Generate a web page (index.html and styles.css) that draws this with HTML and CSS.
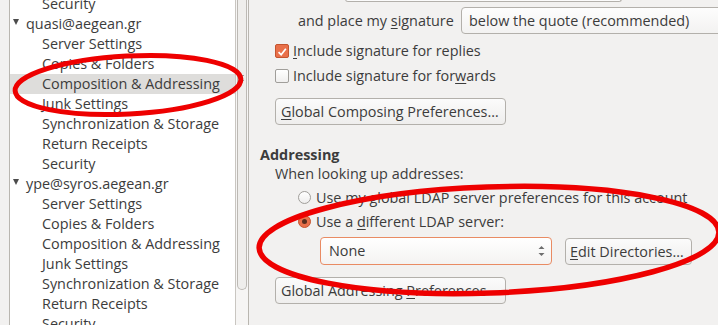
FILE: index.html
```html
<!DOCTYPE html>
<html>
<head>
<meta charset="utf-8">
<link rel="stylesheet" href="styles.css">
</head>
<body>
<div class="window">
  <div class="sidebar">
    <div class="tree">
      <ul class="rows">
        <li class="row child">Security</li>
        <li class="row account"><span class="twisty"></span>quasi@aegean.gr</li>
        <li class="row child">Server Settings</li>
        <li class="row child">Copies &amp; Folders</li>
        <li class="row child selected">Composition &amp; Addressing</li>
        <li class="row child">Junk Settings</li>
        <li class="row child">Synchronization &amp; Storage</li>
        <li class="row child">Return Receipts</li>
        <li class="row child">Security</li>
        <li class="row account"><span class="twisty"></span>ype@syros.aegean.gr</li>
        <li class="row child">Server Settings</li>
        <li class="row child">Copies &amp; Folders</li>
        <li class="row child">Composition &amp; Addressing</li>
        <li class="row child">Junk Settings</li>
        <li class="row child">Synchronization &amp; Storage</li>
        <li class="row child">Return Receipts</li>
        <li class="row child">Security</li>
      </ul>
    </div>
    <div class="scrollbar">
      <div class="thumb"><span class="grip"></span></div>
    </div>
  </div>
  <div class="content">
    <div class="top-combo"></div>
    <div class="sig-row">
      <span class="sig-label">and place my <u>s</u>ignature</span>
      <div class="combo wide">below the quote (recommended)</div>
    </div>
    <label class="check-row"><span class="checkbox checked"><svg viewBox="0 0 14 14" width="14" height="14"><path d="M3 7.2 L6 10.2 L11.5 3.2" fill="none" stroke="#fff" stroke-width="2"/></svg></span><span><u>I</u>nclude signature for replies</span></label>
    <label class="check-row"><span class="checkbox"></span><span>Include signature for for<u>w</u>ards</span></label>
    <div class="btn-row"><button class="btn gbtn first"><u>G</u>lobal Composing Preferences…</button></div>
    <h3 class="section">Addressing</h3>
    <div class="sub">When looking up addresses:</div>
    <label class="radio-row"><span class="radio"></span><span>Use my global LDAP server preferences for this account</span></label>
    <label class="radio-row"><span class="radio on"></span><span>Use a <u>d</u>ifferent LDAP server:</span></label>
    <div class="ldap-row">
      <div class="select">None<span class="spin"><svg width="7" height="14" viewBox="0 0 7 14"><path d="M0.5 5 L3.5 2 L6.5 5Z M0.5 9 L3.5 12 L6.5 9Z" fill="#6e6e6e"/></svg></span></div>
      <button class="btn edit"><u>E</u>dit Directories…</button>
    </div>
    <div class="btn-row"><button class="btn gbtn last">Global Addressing <u>P</u>references</button></div>
  </div>
  <svg class="marks" width="718" height="325" viewBox="0 0 718 325">
    <ellipse cx="128" cy="85" rx="113" ry="29" transform="rotate(-3 128 85)" fill="none" stroke="#ee0000" stroke-width="5"/>
    <ellipse cx="489" cy="240" rx="230" ry="53" transform="rotate(-2 489 240)" fill="none" stroke="#ee0000" stroke-width="5.5"/>
  </svg>
</div>
</body>
</html>
```

FILE: styles.css
```css
html, body {
  margin: 0;
  padding: 0;
}
body {
  background: #f2f1f0;
  font-family: "Open Sans", "Noto Sans", sans-serif;
  font-size: 14.4px;
  color: #3c3c3c;
  width: 718px;
  height: 325px;
  overflow: hidden;
}
.window {
  position: relative;
  display: flex;
  width: 718px;
  height: 325px;
  overflow: hidden;
}
.sidebar {
  display: flex;
  width: 238px;
  margin-left: 9px;
  border-left: 1px solid #b9b6b0;
  border-right: 1px solid #b9b6b0;
  background: #ffffff;
  flex: none;
}
.tree {
  flex: 1;
  overflow: hidden;
}
.rows {
  list-style: none;
  margin: -6px 0 0 0;
  padding: 0;
}
.row {
  height: 20px;
  line-height: 20px;
  white-space: nowrap;
  color: #3c3c3c;
}
.row.child { padding-left: 32px; }
.row.account { padding-left: 3px; display: flex; align-items: center; }
.row.selected { background: #dedddb; }
.twisty {
  width: 0;
  height: 0;
  border-left: 3.5px solid transparent;
  border-right: 3.5px solid transparent;
  border-top: 6px solid #4c4c4c;
  margin: 0 7px 4px 0;
}
.scrollbar {
  width: 12px;
  border-left: 1px solid #c9c6c1;
  background: #f6f5f4;
  flex: none;
}
.thumb {
  height: 290px;
  margin: 0 1px;
  background: #efeeec;
  border: 1px solid #bcb9b4;
  border-top: none;
  border-radius: 0 0 5px 5px;
  box-sizing: border-box;
  display: flex;
  flex-direction: column;
  justify-content: flex-start;
  align-items: center;
}
.grip {
  width: 4px;
  height: 4px;
  margin-top: 75px;
  border-top: 1px solid #9c9a96;
  border-bottom: 1px solid #9c9a96;
}
.content {
  flex: 1;
  display: flex;
  flex-direction: column;
  padding-left: 26px;
  box-sizing: border-box;
}
.top-combo {
  margin-left: 70px;
  width: 277px;
  height: 3px;
  margin-top: -1px;
  border: 1px solid #b3b0ab;
  border-top: none;
  border-radius: 0 0 4px 4px;
  background: #fbfbfb;
  box-sizing: border-box;
}
.sig-row {
  display: flex;
  align-items: center;
  margin-top: 5px;
  height: 27px;
}
.sig-label {
  margin-left: 23px;
  width: 163px;
  flex: none;
}
.combo {
  height: 27px;
  line-height: 25px;
  box-sizing: border-box;
  border: 1px solid #b3b0ab;
  border-radius: 4px;
  background: linear-gradient(#fdfdfd, #f3f2f1);
  padding-left: 7px;
  white-space: nowrap;
}
.combo.wide { width: 270px; flex: none; }
u { text-decoration: underline; text-underline-offset: 2px; }
.check-row, .radio-row {
  display: flex;
  align-items: center;
  height: 25px;
  white-space: nowrap;
}
.check-row { margin-top: 0; }
.sig-row + .check-row { margin-top: 4px; }
.checkbox {
  width: 14px;
  height: 14px;
  box-sizing: border-box;
  border: 1px solid #a09e9a;
  border-radius: 2px;
  background: linear-gradient(#ffffff, #f0efee);
  margin-right: 4px;
  display: flex;
}
.checkbox.checked {
  background: #e9704a;
  border-color: #c4542f;
}
.btn-row { display: flex; }
.btn {
  font-family: inherit;
  font-size: 14.4px;
  color: #3c3c3c;
  height: 27px;
  box-sizing: border-box;
  border: 1px solid #b3b0ab;
  border-radius: 4px;
  background: linear-gradient(#fbfbfb, #efeeed);
  padding: 0 5px;
  text-align: left;
  white-space: nowrap;
}
.gbtn { width: 231px; }
.gbtn.first { margin-top: 10px; }
.gbtn.last { margin-top: 12px; }
.section {
  font-size: 14.4px;
  font-weight: bold;
  margin: 20px 0 0 -15px;
  height: 19px;
  line-height: 19px;
}
.sub { height: 19px; line-height: 19px; margin-top: 0; }
.radio-row { height: 24px; padding-left: 23px; }
.sub + .radio-row { margin-top: 2px; }
.radio {
  width: 13px;
  height: 13px;
  box-sizing: border-box;
  border-radius: 50%;
  border: 1px solid #a09e9a;
  background: linear-gradient(#ffffff, #efeeed);
  margin-right: 5px;
  flex: none;
  display: flex;
  align-items: center;
  justify-content: center;
}
.radio.on {
  background: #e9704a;
  border-color: #c4542f;
}
.radio.on::after {
  content: "";
  width: 5px;
  height: 5px;
  border-radius: 50%;
  background: #5a2e1e;
}
.ldap-row {
  display: flex;
  align-items: center;
  margin-top: 4px;
  padding-left: 45px;
  gap: 13px;
}
.select {
  width: 232px;
  height: 28px;
  box-sizing: border-box;
  border: 1px solid #e98b63;
  border-radius: 4px;
  background: linear-gradient(#ffffff, #f4f3f2);
  padding-left: 8px;
  line-height: 26px;
  display: flex;
  justify-content: space-between;
  align-items: center;
}
.spin { display: flex; margin-right: 6px; }
.edit { width: 127px; height: 27px; padding-left: 4px; }
.marks {
  position: absolute;
  left: 0;
  top: 0;
  pointer-events: none;
}
```
